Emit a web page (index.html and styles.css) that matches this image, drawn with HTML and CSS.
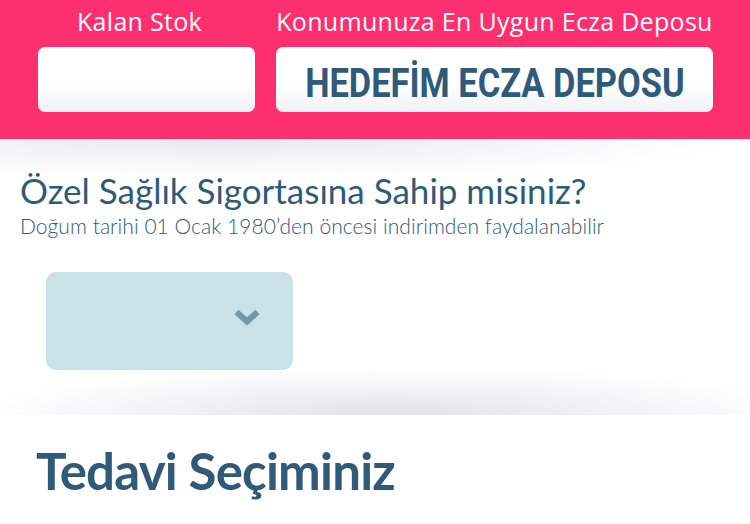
FILE: index.html
```html
<!DOCTYPE html>
<html lang="tr">
<head>
<meta charset="utf-8">
<link rel="stylesheet" href="styles.css">
</head>
<body>
<header class="top">
  <div class="field field-stock">
    <div class="field-label stock-label">Kalan Stok</div>
    <div class="field-box"></div>
  </div>
  <div class="field field-depot">
    <div class="field-label">Konumunuza En Uygun Ecza Deposu</div>
    <div class="field-box depot-box"><span class="depot-name">HEDEFİM ECZA DEPOSU</span></div>
  </div>
</header>
<section class="insurance">
  <h1 class="ins-title">Özel Sağlık Sigortasına Sahip misiniz?</h1>
  <p class="ins-sub">Doğum tarihi 01 Ocak 1980’den öncesi indirimden faydalanabilir</p>
  <div class="select-box">
    <svg class="chevron" viewBox="0 0 26 17" width="26" height="17"><path d="M2.5 3 L13 12.5 L23.5 3" fill="none" stroke="#6f98a9" stroke-width="6" stroke-linecap="butt" stroke-linejoin="miter"/></svg>
  </div>
  <div class="shade"></div>
</section>
<section class="treatment">
  <h2 class="treat-title">Tedavi Seçiminiz</h2>
</section>
</body>
</html>
```

FILE: styles.css
```css
html, body {
  margin: 0;
  padding: 0;
  background: #ffffff;
}
body {
  width: 750px;
  height: 524px;
  overflow: hidden;
  font-family: "Lato", "Open Sans", sans-serif;
}
.top {
  background: #fe2f6e;
  height: 139px;
  box-sizing: border-box;
  display: grid;
  grid-template-columns: 217px 437px;
  column-gap: 21px;
  padding: 0 37px 0 38px;
}
.field {
  display: flex;
  flex-direction: column;
  align-items: stretch;
}
.field-label {
  color: #ffffff;
  font-family: "Open Sans", sans-serif;
  font-weight: 400;
  font-size: 25px;
  letter-spacing: 0.3px;
  line-height: 26px;
  text-align: center;
  white-space: nowrap;
  margin-top: 8px;
  height: 39px;
}
.stock-label {
  padding-right: 14px;
}
.field-box {
  height: 65px;
  border-radius: 7px;
  background: linear-gradient(180deg, #ffffff 55%, #eef1f4 100%);
}
.depot-box {
  display: flex;
  align-items: center;
  justify-content: center;
  padding-top: 7px;
  box-sizing: border-box;
}
.depot-name {
  display: inline-block;
  font-family: "Roboto", sans-serif;
  font-weight: 700;
  font-size: 41px;
  line-height: 1;
  color: #2f5a78;
  white-space: nowrap;
  transform: scaleX(0.84);
}
.insurance {
  background:
    radial-gradient(ellipse 520px 40px at 30% 0%, rgba(220, 224, 230, 0.7), rgba(255, 255, 255, 0) 100%),
    #ffffff;
  padding: 1px 0 0 0;
  display: flex;
  flex-direction: column;
}
.ins-title {
  margin: 30px 0 0 20px;
  font-family: "Lato", sans-serif;
  font-weight: 400;
  font-size: 35px;
  line-height: 40px;
  color: #2f5a78;
  white-space: nowrap;
}
.ins-sub {
  margin: 4px 0 0 20px;
  font-family: "Lato", sans-serif;
  font-weight: 300;
  font-size: 21px;
  letter-spacing: 0.05px;
  line-height: 24px;
  color: #2f5a78;
  white-space: nowrap;
}
.select-box {
  margin: 34px 0 0 46px;
  width: 247px;
  height: 98px;
  border-radius: 10px;
  background: #c8e2e7;
  display: flex;
  align-items: center;
  justify-content: flex-end;
  padding-right: 33px;
  box-sizing: border-box;
}
.chevron {
  display: block;
  margin-top: -8px;
}
.shade {
  height: 45px;
  background: radial-gradient(ellipse 420px 48px at 52% 100%, rgba(212, 217, 222, 0.72), rgba(255, 255, 255, 0) 100%);
}
.treatment {
  background: #ffffff;
}
.treat-title {
  margin: 26px 0 0 36px;
  font-family: "Lato", sans-serif;
  font-weight: 700;
  font-size: 51px;
  letter-spacing: -0.8px;
  line-height: 60px;
  color: #2f5a78;
  white-space: nowrap;
}
```
